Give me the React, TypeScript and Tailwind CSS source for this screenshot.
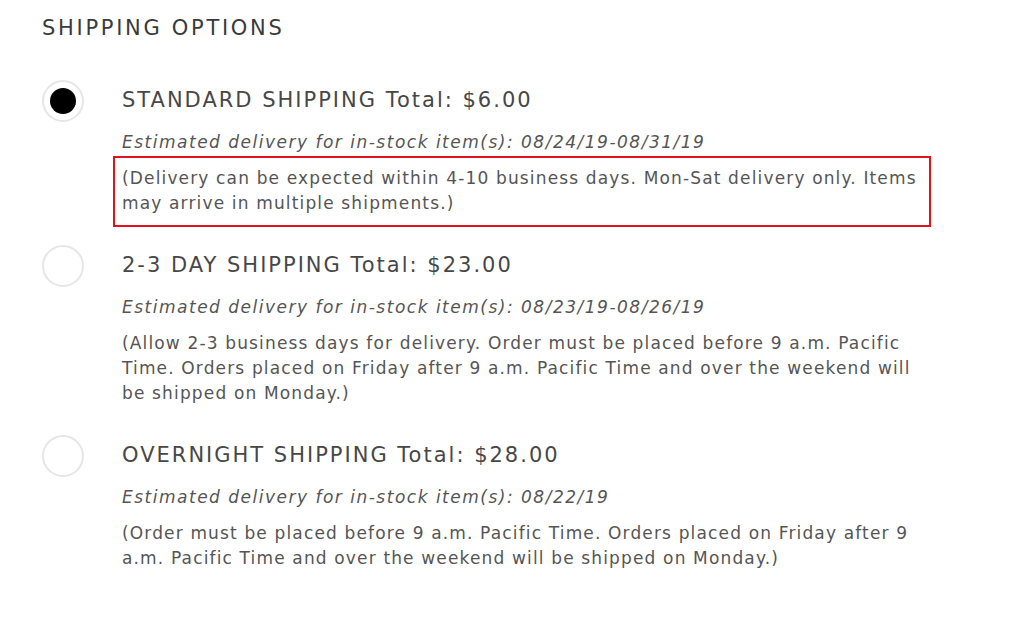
import React from "react";

type Opt = {
  title: string;
  est: string;
  lines: string[];
  selected?: boolean;
  highlight?: boolean;
};

const opts: Opt[] = [
  {
    title: "STANDARD SHIPPING Total: $6.00",
    est: "Estimated delivery for in-stock item(s): 08/24/19-08/31/19",
    lines: [
      "(Delivery can be expected within 4-10 business days. Mon-Sat delivery only. Items",
      "may arrive in multiple shipments.)",
    ],
    selected: true,
    highlight: true,
  },
  {
    title: "2-3 DAY SHIPPING Total: $23.00",
    est: "Estimated delivery for in-stock item(s): 08/23/19-08/26/19",
    lines: [
      "(Allow 2-3 business days for delivery. Order must be placed before 9 a.m. Pacific",
      "Time. Orders placed on Friday after 9 a.m. Pacific Time and over the weekend will",
      "be shipped on Monday.)",
    ],
  },
  {
    title: "OVERNIGHT SHIPPING Total: $28.00",
    est: "Estimated delivery for in-stock item(s): 08/22/19",
    lines: [
      "(Order must be placed before 9 a.m. Pacific Time. Orders placed on Friday after 9",
      "a.m. Pacific Time and over the weekend will be shipped on Monday.)",
    ],
  },
];

export default function App() {
  return (
    <div
      className="w-[1024px] h-[629px] bg-white overflow-hidden pl-[42px] pt-[14px]"
      style={{ fontFamily: '"DejaVu Sans", "Open Sans", sans-serif' }}
    >
      <h2 className="text-[21px] leading-[28px] tracking-[2.7px] text-[#3a3a3a]">
        SHIPPING OPTIONS
      </h2>
      <div className="mt-[38px] flex flex-col gap-[18px]">
        {opts.map((o) => (
          <div key={o.title} className="flex">
            <div className="w-[71px] shrink-0">
              <div className="w-[42px] h-[42px] rounded-full border-2 border-[#e6e6e6] flex items-center justify-center">
                {o.selected && (
                  <div className="w-[26px] h-[26px] rounded-full bg-black" />
                )}
              </div>
            </div>
            <div className="flex flex-col">
              <div className="pl-[9px] text-[21px] leading-[40px] tracking-[2px] text-[#474747]">
                {o.title}
              </div>
              <div className="pl-[9px] mt-[10px] text-[17px] leading-[24px] italic tracking-[1.5px] text-[#555555]">
                {o.est}
              </div>
              <div
                className={
                  "mt-[2px] w-[818px] border-2 pt-[8px] pb-[9px] px-[7px] text-[17px] leading-[25px] tracking-[1.15px] text-[#555555] " +
                  (o.highlight ? "border-[#e0141e]" : "border-transparent")
                }
              >
                {o.lines.map((l, i) => (
                  <div key={i} className="whitespace-nowrap">
                    {l}
                  </div>
                ))}
              </div>
            </div>
          </div>
        ))}
      </div>
    </div>
  );
}
